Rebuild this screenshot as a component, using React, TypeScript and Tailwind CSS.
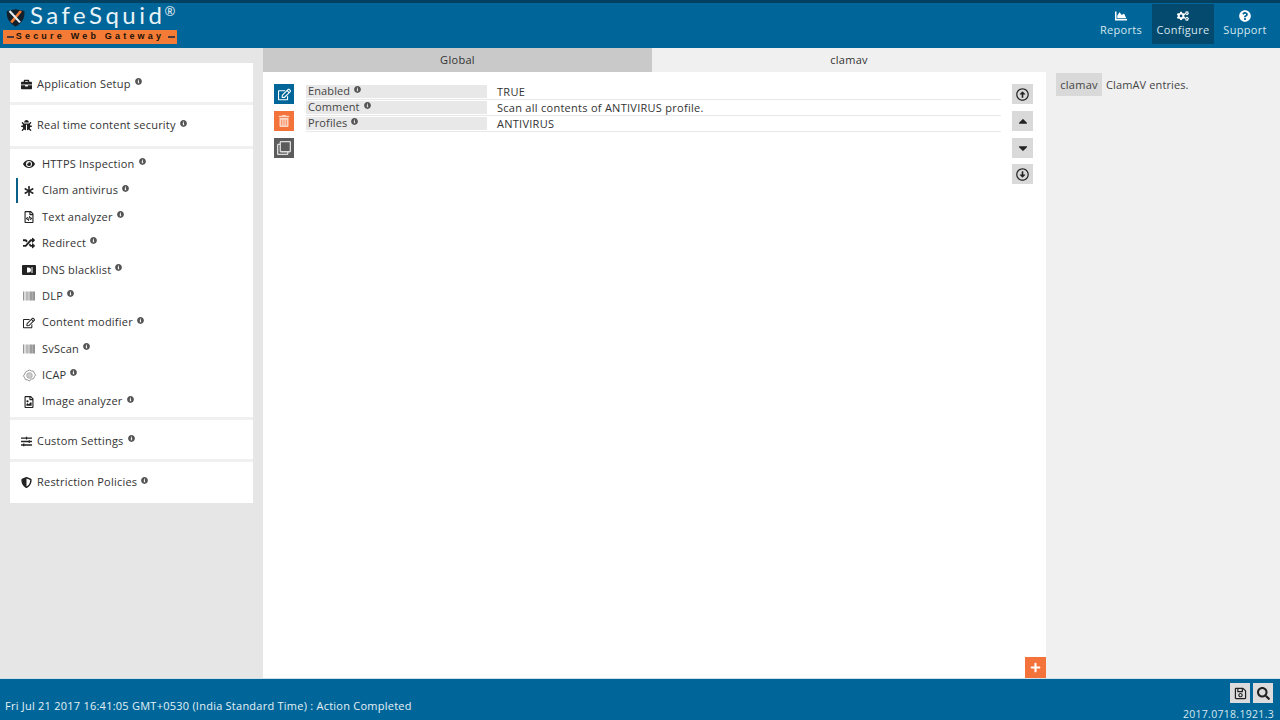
import React from "react";
import { FaBriefcase, FaBug, FaEye, FaAsterisk, FaRegFileCode, FaRandom, FaBarcode, FaRegEdit, FaSlidersH, FaShieldAlt, FaInfoCircle, FaChartArea, FaCogs, FaQuestionCircle, FaTrashAlt, FaRegClone, FaRegArrowAltCircleUp, FaRegArrowAltCircleDown, FaCaretUp, FaCaretDown, FaRegSave, FaSearch, FaPlus, FaRegFileImage } from "react-icons/fa";

const font = { fontFamily: '"Open Sans", "Noto Sans", sans-serif' };

function Info() {
  return <FaInfoCircle className="text-[#555] text-[7px] ml-[4px] -mt-[5px] shrink-0" />;
}

function DnsIcon() {
  return (
    <svg viewBox="0 0 14 10" className="w-[14px] h-[10px]">
      <rect width="14" height="10" rx="1" fill="#222" />
      <path d="M5 2.5h1.5a2.5 2.5 0 0 1 0 5H5z" fill="#fff" />
      <path d="M10 2v6" stroke="#fff" strokeWidth="1" />
    </svg>
  );
}

function IcapIcon() {
  return (
    <svg viewBox="0 0 14 14" className="w-[13px] h-[13px]" fill="none" stroke="#8a8a8a" strokeWidth="1">
      <path d="M7 1l2 1.2 2.3.2.9 2.1 1.3 1.9-1.3 2-.9 2.1-2.3.2L7 13l-2-1.3-2.3-.2-.9-2.1L.5 7.4l1.3-1.9.9-2.1L5 2.2z" />
      <circle cx="7" cy="7" r="3" fill="#ccc" stroke="#aaa" />
    </svg>
  );
}

function Head({ icon, label, h }: { icon: React.ReactNode; label: string; h: string }) {
  return (
    <div className={"flex items-center pl-[11px] bg-white " + h}>
      <span className="w-[11px] flex justify-center text-[#222] text-[11px]">{icon}</span>
      <span className="ml-[5px] text-[11px] tracking-[0.22px] text-[#333]">{label}</span>
      <Info />
    </div>
  );
}

const items: { icon: React.ReactNode; label: string; active?: boolean }[] = [
  { icon: <FaEye />, label: "HTTPS Inspection" },
  { icon: <FaAsterisk className="text-[10px]" />, label: "Clam antivirus", active: true },
  { icon: <FaRegFileCode />, label: "Text analyzer" },
  { icon: <FaRandom />, label: "Redirect" },
  { icon: <DnsIcon />, label: "DNS blacklist" },
  { icon: <FaBarcode className="text-[#555]" />, label: "DLP" },
  { icon: <FaRegEdit />, label: "Content modifier" },
  { icon: <FaBarcode className="text-[#555]" />, label: "SvScan" },
  { icon: <IcapIcon />, label: "ICAP" },
  { icon: <FaRegFileImage />, label: "Image analyzer" },
];

function NavBtn({ icon, label, active }: { icon: React.ReactNode; label: string; active?: boolean }) {
  return (
    <div className={"w-[62px] h-[40px] pb-[2px] flex flex-col items-center justify-center text-[#d5e6ef] " + (active ? "bg-[#044a6e]" : "")}>
      <span className="text-[12px] text-white mb-[1px]">{icon}</span>
      <span className="text-[11px] leading-[13px] tracking-[0.3px]">{label}</span>
    </div>
  );
}

function Side({ children }: { children: React.ReactNode }) {
  return <div className="w-[21px] h-[20px] bg-[#d9d9d9] text-[#222] text-[13px] flex items-center justify-center">{children}</div>;
}

function Row({ k, v }: { k: string; v: string }) {
  return (
    <div className="flex h-[16px] border-b border-[#e8e8e8]">
      <div className="w-[181px] h-[13px] mt-[1px] bg-[#e8e8e8] flex items-center pl-[2px] text-[11px] tracking-[0.12px] text-[#444]">
        {k}
        <Info />
      </div>
      <div className="ml-[10px] text-[11px] leading-[15px] tracking-[0.27px] text-[#333]">{v}</div>
    </div>
  );
}

export default function App() {
  return (
    <div style={font} className="w-[1280px] h-[720px] flex flex-col overflow-hidden bg-[#e6e6e6]">
      <header className="h-[48px] shrink-0 bg-[#006699] border-t-[3px] border-[#04405f] flex justify-between">
        <div className="ml-[3px] w-[174px] flex flex-col">
          <div className="flex items-center h-[27px]">
            <svg viewBox="0 0 24 22" className="w-[21px] h-[20px] ml-[3px] mt-[3px] shrink-0">
              <path d="M1 3l10 -2l10 2c1 8 -3 14 -10 18c-7 -4 -11 -10 -10 -18z" fill="#15202b" />
              <path d="M17 3l-11 13" stroke="#f47b36" strokeWidth="3" />
              <path d="M4 3l12 13" stroke="#e8eef2" strokeWidth="2.5" />
            </svg>
            <span style={{ fontFamily: '"Lato", sans-serif' }} className="ml-[3px] -mt-[4px] text-[24px] leading-[24px] tracking-[3.5px] text-[#e9f3f7]">SafeSquid</span>
            <span className="text-[13px] text-[#e9f3f7] -mt-[9px] -ml-[1px]">®</span>
          </div>
          <div className="relative h-[14px] bg-[#f47b36] flex items-center justify-center text-[9px] font-bold tracking-[3.2px] text-[#1a1208]" style={{ fontFamily: '"Liberation Sans", sans-serif' }}>
            Secure Web Gateway
            <span className="absolute left-[4px] top-[6px] w-[7px] h-[2px] bg-[#4a3a3a]" />
            <span className="absolute right-[2px] top-[6px] w-[7px] h-[2px] bg-[#4a3a3a]" />
          </div>
        </div>
        <nav className="flex items-start mt-[1px] mr-[4px]">
          <NavBtn icon={<FaChartArea />} label="Reports" />
          <NavBtn icon={<FaCogs />} label="Configure" active />
          <NavBtn icon={<FaQuestionCircle />} label="Support" />
        </nav>
      </header>

      <div className="flex-1 flex min-h-0">
        <aside className="w-[263px] shrink-0 pt-[15px] pl-[10px] pr-[10px]">
          <div className="flex flex-col gap-[3px] bg-[#f0f0f0]">
            <Head icon={<FaBriefcase />} label="Application Setup" h="h-[39px] pt-[3px]" />
            <Head icon={<FaBug />} label="Real time content security" h="h-[41px]" />
            <div className="bg-white h-[268px] pt-[2px]">
              {items.map((it) => (
                <div key={it.label} className="h-[26.4px] flex items-center relative pl-[12px]">
                  {it.active && <span className="absolute left-[6px] top-[1px] w-[2px] h-[25px] bg-[#0a5f86]" />}
                  <span className="w-[14px] flex justify-center text-[12px] text-[#222]">{it.icon}</span>
                  <span className="ml-[6px] text-[11px] tracking-[0.22px] text-[#333]">{it.label}</span>
                  <Info />
                </div>
              ))}
            </div>
            <Head icon={<FaSlidersH />} label="Custom Settings" h="h-[39px] pt-[3px]" />
            <Head icon={<FaShieldAlt />} label="Restriction Policies" h="h-[41px]" />
          </div>
        </aside>

        <main className="w-[783px] shrink-0 flex flex-col">
          <div className="flex h-[24px] shrink-0">
            <div className="w-[389px] bg-[#c9c9c9] flex items-center justify-center text-[11px] tracking-[0.3px] text-[#333]">Global</div>
            <div className="flex-1 bg-[#f0f0f0] flex items-center justify-center text-[11px] tracking-[0.3px] text-[#333]">clamav</div>
          </div>
          <div className="flex-1 bg-white relative flex pt-[12px] pl-[11px] pr-[13px]">
            <div className="flex flex-col gap-[7px] w-[20px] shrink-0">
              <div className="h-[20px] bg-[#006699] text-white text-[13px] flex items-center justify-center"><FaRegEdit /></div>
              <div className="h-[20px] bg-[#f4733a] text-[#fbd5c4] text-[12px] flex items-center justify-center"><FaTrashAlt /></div>
              <div className="h-[20px] bg-[#5c5c5c] text-[#ddd] text-[14px] flex items-center justify-center"><FaRegClone /></div>
            </div>
            <div className="ml-[12px] w-[695px] flex flex-col">
              <Row k="Enabled" v="TRUE" />
              <Row k="Comment" v="Scan all contents of ANTIVIRUS profile." />
              <Row k="Profiles" v="ANTIVIRUS" />
            </div>
            <div className="ml-auto flex flex-col gap-[7px]">
              <Side><FaRegArrowAltCircleUp /></Side>
              <Side><FaCaretUp className="text-[14px]" /></Side>
              <Side><FaCaretDown className="text-[14px]" /></Side>
              <div className="-mt-[1px]"><Side><FaRegArrowAltCircleDown /></Side></div>
            </div>
            <div className="absolute right-0 bottom-0 w-[21px] h-[21px] bg-[#f4733a] text-white text-[11px] flex items-center justify-center"><FaPlus /></div>
          </div>
        </main>

        <section className="flex-1 bg-[#f0f0f0] pt-[25px] pl-[10px] flex items-start">
          <div className="h-[23px] w-[46px] pt-[1px] bg-[#d9d9d9] flex items-center justify-center text-[11px] tracking-[0.3px] text-[#444]">clamav</div>
          <div className="ml-[4px] h-[23px] pt-[1px] flex items-center text-[11px] tracking-[0.12px] text-[#444]">ClamAV entries.</div>
        </section>
      </div>

      <footer className="h-[42px] shrink-0 bg-[#006699] border-t border-[#cfe0e8] flex justify-between">
        <div className="ml-[5px] mt-[19px] text-[11px] leading-[15px] tracking-[0.24px] text-[#e4f0f6]">
          Fri Jul 21 2017 16:41:05 GMT+0530 (India Standard Time) : Action Completed
        </div>
        <div className="mr-[7px] flex flex-col items-end pt-[4px]">
          <div className="flex gap-[3px]">
            <div className="w-[20px] h-[20px] bg-[#dcdcdc] text-[#222] text-[13px] flex items-center justify-center"><FaRegSave /></div>
            <div className="w-[20px] h-[20px] bg-[#dcdcdc] text-[#222] text-[13px] flex items-center justify-center"><FaSearch /></div>
          </div>
          <div className="mt-[5px] text-[10.5px] leading-[12px] tracking-[0.3px] text-[#d5e6ef] -mr-[1px]">2017.0718.1921.3</div>
        </div>
      </footer>
    </div>
  );
}
